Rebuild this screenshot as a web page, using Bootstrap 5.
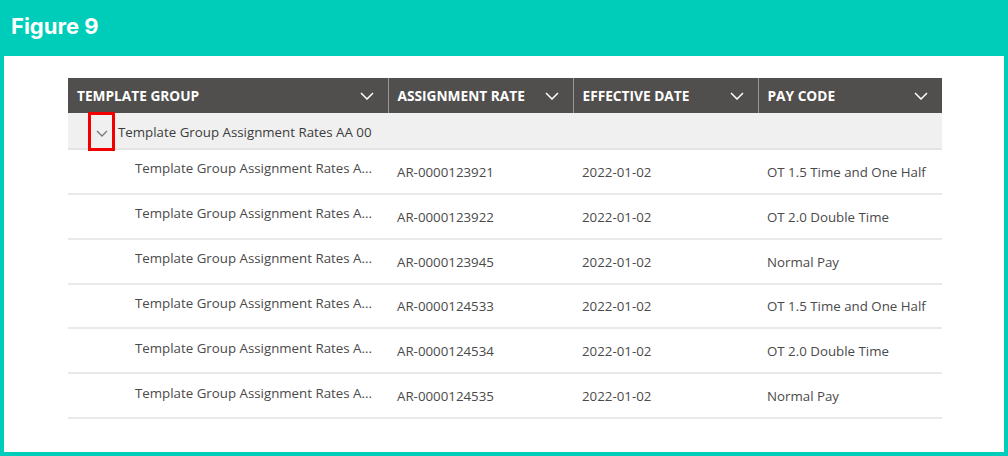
<!DOCTYPE html>
<html lang="en">
<head>
    <meta charset="UTF-8">
    <title>Figure 9</title>
    <link href="https://cdn.jsdelivr.net/npm/bootstrap@5.3.0/dist/css/bootstrap.min.css" rel="stylesheet">
    <style>
        html, body { width: 1008px; height: 456px; overflow: hidden; }
        body { background-color: #00cdb9; font-family: "Open Sans", "Liberation Sans", sans-serif; }
        .figure-title { height: 56px; padding: 12px 0 0 11px; color: #fff; font-family: Inter, "Open Sans", sans-serif; font-weight: 700; font-size: 22px; line-height: 28px; }
        .figure-body { margin: 0 4px 0 4px; height: 396px; background-color: #fff; padding: 22px 0 0 64px; }
        .rates { width: 874px; table-layout: fixed; margin: 0; font-size: 13.3px; color: #4a4a4a; }
        .rates th { background-color: #504f4d; color: #fff; height: 35px; padding: 1px 14px 0 9px; font-size: 13.7px; font-weight: 700; vertical-align: middle; border-bottom: 0; border-right: 1px solid #9a9896; box-shadow: none; white-space: nowrap; }
        .rates th:last-child { border-right: 0; }
        .rates td { height: 44.85px; padding: 3px 9px 0; border-bottom: 2px solid #e9e9e9; vertical-align: middle; box-shadow: none; white-space: nowrap; }
        .rates td.name-cell { padding: 0 0 4px 67px; }
        .rates .group-row td { height: 36px; padding: 0 0 0 20px; background-color: #f0f0f0; color: #3c3c3c; border-bottom: 2px solid #e4e4e4; }
        .toggle { width: 27px; height: 34px; margin-right: 3px; }
        .toggle-mark { border: 3px solid #f00000; inset: -2px 0 -3px 0; }
        .sort-icon { width: 14px; height: 8px; fill: none; stroke: #fff; stroke-width: 1.5; }
        .toggle-icon { width: 12px; height: 7px; fill: none; stroke: #777; stroke-width: 1.3; margin-top: 6px; }
    </style>
</head>
<body>
    <div class="figure-title">Figure 9</div>
    <div class="figure-body">
        <table class="table rates">
            <colgroup>
                <col style="width: 320px">
                <col style="width: 185px">
                <col style="width: 185px">
                <col style="width: 184px">
            </colgroup>
            <thead>
                <tr>
                    <th><div class="d-flex justify-content-between align-items-center">TEMPLATE GROUP <svg class="sort-icon" viewBox="0 0 14 8"><path d="M1 1l6 6 6-6"/></svg></div></th>
                    <th><div class="d-flex justify-content-between align-items-center">ASSIGNMENT RATE <svg class="sort-icon" viewBox="0 0 14 8"><path d="M1 1l6 6 6-6"/></svg></div></th>
                    <th><div class="d-flex justify-content-between align-items-center">EFFECTIVE DATE <svg class="sort-icon" viewBox="0 0 14 8"><path d="M1 1l6 6 6-6"/></svg></div></th>
                    <th><div class="d-flex justify-content-between align-items-center">PAY CODE <svg class="sort-icon" viewBox="0 0 14 8"><path d="M1 1l6 6 6-6"/></svg></div></th>
                </tr>
            </thead>
            <tbody>
                <tr class="group-row">
                    <td colspan="4">
                        <div class="d-flex align-items-center">
                            <span class="toggle position-relative d-flex align-items-center justify-content-center">
                                <svg class="toggle-icon" viewBox="0 0 12 7"><path d="M1 1l5 5 5-5"/></svg>
                                <span class="toggle-mark position-absolute"></span>
                            </span>
                            <span class="pt-1">Template Group Assignment Rates AA 00</span>
                        </div>
                    </td>
                </tr>
                <tr><td class="name-cell text-truncate">Template Group Assignment Rates A...</td><td>AR-0000123921</td><td>2022-01-02</td><td>OT 1.5 Time and One Half</td></tr>
                <tr><td class="name-cell text-truncate">Template Group Assignment Rates A...</td><td>AR-0000123922</td><td>2022-01-02</td><td>OT 2.0 Double Time</td></tr>
                <tr><td class="name-cell text-truncate">Template Group Assignment Rates A...</td><td>AR-0000123945</td><td>2022-01-02</td><td>Normal Pay</td></tr>
                <tr><td class="name-cell text-truncate">Template Group Assignment Rates A...</td><td>AR-0000124533</td><td>2022-01-02</td><td>OT 1.5 Time and One Half</td></tr>
                <tr><td class="name-cell text-truncate">Template Group Assignment Rates A...</td><td>AR-0000124534</td><td>2022-01-02</td><td>OT 2.0 Double Time</td></tr>
                <tr><td class="name-cell text-truncate">Template Group Assignment Rates A...</td><td>AR-0000124535</td><td>2022-01-02</td><td>Normal Pay</td></tr>
            </tbody>
        </table>
    </div>
</body>
</html>
